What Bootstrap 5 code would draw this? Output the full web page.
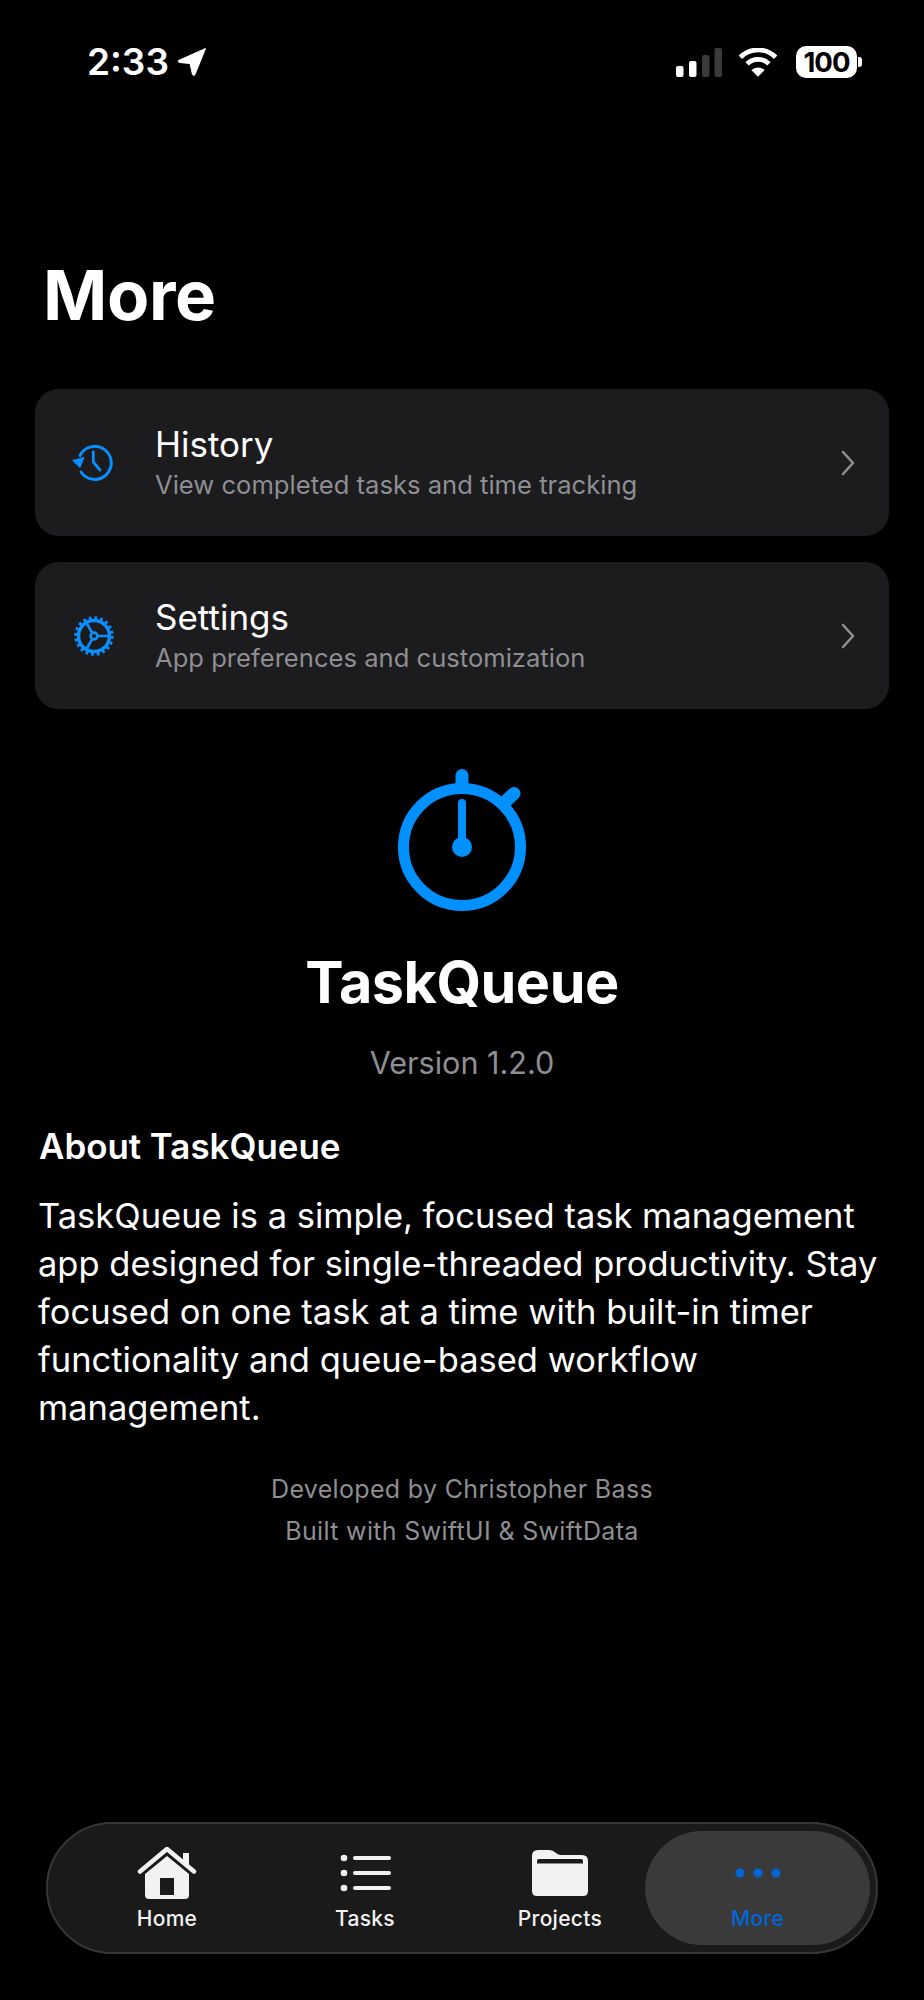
<!DOCTYPE html>
<html lang="en">
<head>
  <meta charset="UTF-8">
  <meta name="viewport" content="width=device-width, initial-scale=1.0">
  <title>TaskQueue - More</title>
  <link href="https://cdn.jsdelivr.net/npm/bootstrap@5.3.0/dist/css/bootstrap.min.css" rel="stylesheet">
  <style>
    body { background: #000; color: #fff; font-family: Inter, "Liberation Sans", sans-serif; }
    .screen { height: 2000px; }
    .status-row { height: 32px; margin-top: 46px; padding: 0 62px 0 87px; }
    .status-time { font-size: 37px; font-weight: 600; line-height: 32px; }
    .signal-icon { margin-right: 16px; }
    .wifi-icon { margin-right: 18px; }
    .batt-box { width: 61px; height: 32px; background: #fff; border-radius: 10px; color: #000; font-size: 27.5px; font-weight: 700; line-height: 32px; text-align: center; letter-spacing: -1px; }
    .batt-nub { width: 4px; height: 10px; background: #fff; border-radius: 0 3px 3px 0; margin-left: 1px; }
    .page-title { font-size: 69px; font-weight: 700; line-height: 84px; margin: 175px 0 52px 43px; letter-spacing: -0.3px; }
    .menu-card { background: #1c1c1e; border: 0; border-radius: 24px; height: 147px; margin: 0 35px 26px; padding: 0 34px 0 36px; }
    .menu-icon { width: 46px; flex: none; margin-right: 38px; }
    .menu-name { font-size: 35px; line-height: 42px; color: #fff; margin-bottom: 3px; }
    .menu-sub { font-size: 25.6px; line-height: 34px; color: #8e8e93; }
    .about-logo { margin-top: 34px; }
    .app-name { font-size: 57.5px; font-weight: 700; line-height: 70px; margin-top: 34px; letter-spacing: -0.5px; }
    .app-version { font-size: 30.6px; line-height: 40px; color: #8e8e93; margin-top: 26px; }
    .about-block { padding: 0 38px; margin-top: 41px; }
    .about-head { font-size: 34.9px; font-weight: 600; line-height: 44px; margin-bottom: 24px; padding-left: 1px; }
    .about-text { font-size: 34.5px; line-height: 47.9px; margin: 0; }
    .credits { font-size: 25px; line-height: 42px; color: #8e8e93; margin-top: 36px; letter-spacing: 0.33px; }
    .tab-bar { height: 132px; margin: auto 46px 46px; background: #1a1a1a; border: 2px solid #363636; border-radius: 66px; padding: 7px 6px 7px 0; }
    .tab-item { width: 198px; flex: none; font-size: 21px; font-weight: 500; color: #f2f2f2; line-height: 26px; letter-spacing: 0.3px; padding-top: 2px; }
    .tab-icon { height: 54px; margin-bottom: 6px; }
    .tab-projects { width: 170px; margin-left: 11px; }
    .tab-active { flex: 1 1 auto; width: auto; height: 100%; background: #3a3a3a; border-radius: 58px; color: #0066d6; }
    .tab-spacer { width: 20px; flex: none; }
  </style>
</head>
<body>
  <div class="screen d-flex flex-column">
    <div class="status-row d-flex justify-content-between align-items-center">
      <div class="d-flex align-items-center gap-2">
        <span class="status-time">2:33</span>
        <svg width="30" height="30" viewBox="0 0 30 30"><path d="M28.5 1.5 L1.5 13.5 Q0.5 15 2.5 15.5 L13 16.5 L15.5 27.5 Q17 29.5 18 27.5 Z" fill="#fff" stroke="#fff" stroke-width="1" stroke-linejoin="round"/></svg>
      </div>
      <div class="d-flex align-items-center">
        <svg width="46" height="29" viewBox="0 0 46 29" class="signal-icon">
          <rect x="0" y="18" width="7.5" height="11" rx="2" fill="#fff"/>
          <rect x="13" y="13" width="7.5" height="16" rx="2" fill="#fff"/>
          <rect x="26" y="7" width="7.5" height="22" rx="2" fill="#3a3a3a"/>
          <rect x="38.5" y="0" width="7.5" height="29" rx="2" fill="#3a3a3a"/>
        </svg>
        <svg width="40" height="29" viewBox="0 0 42 30" class="wifi-icon">
          <path d="M2.5 9.5 A26 26 0 0 1 39.5 9.5" fill="none" stroke="#fff" stroke-width="5"/>
          <path d="M9.5 16.5 A16 16 0 0 1 32.5 16.5" fill="none" stroke="#fff" stroke-width="5"/>
          <path d="M14 23 L21 30 L28 23 A10 10 0 0 0 14 23 Z" fill="#fff"/>
        </svg>
        <div class="batt-box">100</div>
        <div class="batt-nub"></div>
      </div>
    </div>

    <h1 class="page-title">More</h1>

    <div class="card menu-card flex-row align-items-center">
      <div class="menu-icon">
        <svg width="46" height="46" viewBox="0 0 46 46">
          <path d="M9 15.5 A16.5 16.5 0 1 1 10 32" fill="none" stroke="#0a8fff" stroke-width="3" stroke-linecap="round"/>
          <path d="M1.7 20.5 L13 17.5 L9 27.5 Z" fill="#0a8fff" stroke="#0a8fff" stroke-width="1" stroke-linejoin="round"/>
          <path d="M22.3 12 V22 L29 30" fill="none" stroke="#0a8fff" stroke-width="2.8" stroke-linecap="round" stroke-linejoin="round"/>
        </svg>
      </div>
      <div class="flex-grow-1">
        <div class="menu-name">History</div>
        <div class="menu-sub">View completed tasks and time tracking</div>
      </div>
      <svg width="14" height="26" viewBox="0 0 14 26"><path d="M2 2 L12 13 L2 24" fill="none" stroke="#8e8e93" stroke-width="2.6" stroke-linecap="round" stroke-linejoin="round"/></svg>
    </div>

    <div class="card menu-card flex-row align-items-center">
      <div class="menu-icon">
        <svg width="46" height="46" viewBox="0 0 46 46">
          <circle cx="23" cy="23" r="15.5" fill="none" stroke="#0a8fff" stroke-width="3.4"/>
          <circle cx="23" cy="23" r="18" fill="none" stroke="#0a8fff" stroke-width="3.6" stroke-dasharray="2.7 2.95"/>
          <circle cx="23" cy="23" r="3.4" fill="none" stroke="#0a8fff" stroke-width="2.6"/>
          <path d="M26 23 H38 M21.5 20.4 L15.5 10 M21.5 25.6 L15.5 36" stroke="#0a8fff" stroke-width="2.6"/>
        </svg>
      </div>
      <div class="flex-grow-1">
        <div class="menu-name">Settings</div>
        <div class="menu-sub">App preferences and customization</div>
      </div>
      <svg width="14" height="26" viewBox="0 0 14 26"><path d="M2 2 L12 13 L2 24" fill="none" stroke="#8e8e93" stroke-width="2.6" stroke-linecap="round" stroke-linejoin="round"/></svg>
    </div>

    <div class="text-center about-logo">
      <svg width="132" height="144" viewBox="0 0 132 144" class="d-block mx-auto">
        <circle cx="66" cy="78" r="58.5" fill="none" stroke="#0091ff" stroke-width="11"/>
        <path d="M66 18 V6.5" stroke="#0091ff" stroke-width="13" stroke-linecap="round"/>
        <path d="M110 32 L118 24.5" stroke="#0091ff" stroke-width="13" stroke-linecap="round"/>
        <path d="M66 78 V34" stroke="#0091ff" stroke-width="8" stroke-linecap="round"/>
        <circle cx="66" cy="78" r="10" fill="#0091ff"/>
      </svg>
      <div class="app-name">TaskQueue</div>
      <div class="app-version">Version 1.2.0</div>
    </div>

    <div class="about-block">
      <div class="about-head">About TaskQueue</div>
      <p class="about-text">TaskQueue is a simple, focused task management app designed for single-threaded productivity. Stay focused on one task at a time with built-in timer functionality and queue-based workflow management.</p>
    </div>

    <div class="credits text-center">
      <div>Developed by Christopher Bass</div>
      <div>Built with SwiftUI &amp; SwiftData</div>
    </div>

    <div class="tab-bar d-flex align-items-center">
      <div class="tab-spacer"></div>
      <div class="tab-item text-center">
        <div class="tab-icon d-flex justify-content-center">
          <svg width="60" height="54" viewBox="0 0 60 54">
            <path d="M3 25.5 L30 3 L57 25.5" fill="none" stroke="#f2f2f2" stroke-width="4.5" stroke-linecap="round" stroke-linejoin="round"/>
            <rect x="46" y="7" width="6" height="12" fill="#f2f2f2"/>
            <path fill-rule="evenodd" d="M30 10 L52 28 V49 Q52 53 48 53 H12 Q8 53 8 49 V28 Z M23 32 V49 H37 V32 Z" fill="#f2f2f2"/>
          </svg>
        </div>
        Home
      </div>
      <div class="tab-item text-center">
        <div class="tab-icon d-flex justify-content-center">
          <svg width="52" height="54" viewBox="0 0 52 54">
            <circle cx="5" cy="12" r="3.3" fill="#f2f2f2"/><circle cx="5" cy="27" r="3.3" fill="#f2f2f2"/><circle cx="5" cy="42" r="3.3" fill="#f2f2f2"/>
            <path d="M16 12 H50 M16 27 H50 M16 42 H50" stroke="#f2f2f2" stroke-width="4" stroke-linecap="round"/>
          </svg>
        </div>
        Tasks
      </div>
      <div class="tab-item tab-projects text-center">
        <div class="tab-icon d-flex justify-content-center">
          <svg width="56" height="54" viewBox="0 0 56 54">
            <path fill-rule="evenodd" d="M6 4 H17 Q21 4 24 7 Q26 9 29 9 H50 Q56 9 56 15 V45 Q56 50 51 50 H5 Q0 50 0 45 V10 Q0 4 6 4 Z M7 13 Q5 13 5 15 V17.5 H51 V15 Q51 13 49 13 Z" fill="#f2f2f2"/>
          </svg>
        </div>
        Projects
      </div>
      <div class="tab-item tab-active text-center d-flex flex-column justify-content-center">
        <div class="tab-icon d-flex justify-content-center align-items-center gap-2">
          <svg width="46" height="10" viewBox="0 0 46 10"><circle cx="5" cy="5" r="4.6" fill="#0066d6"/><circle cx="23" cy="5" r="4.6" fill="#0066d6"/><circle cx="41" cy="5" r="4.6" fill="#0066d6"/></svg>
        </div>
        More
      </div>
    </div>
  </div>
  <script src="https://cdn.jsdelivr.net/npm/bootstrap@5.3.0/dist/js/bootstrap.bundle.min.js"></script>
</body>
</html>
